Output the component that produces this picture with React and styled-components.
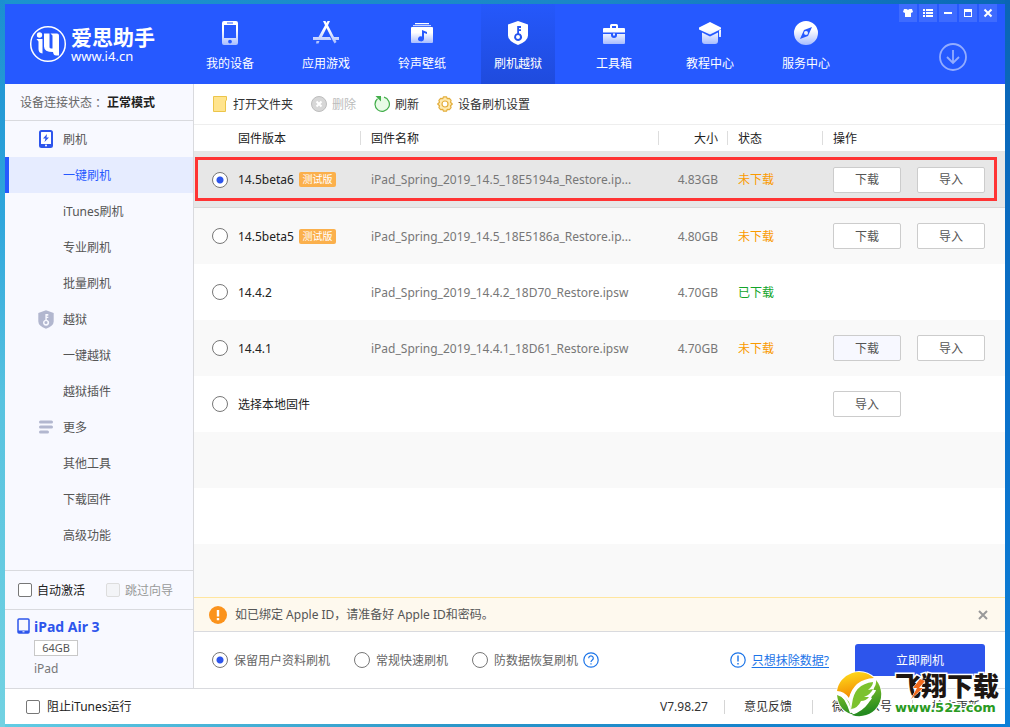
import React from "react";
import styled, { createGlobalStyle, css } from "styled-components";

const blue = "#2659ff";
const royal = "#2d55ec";
const line = "#d9dade";

const GlobalStyle = createGlobalStyle`
  * { box-sizing: border-box; }
  body { margin: 0; }
  body, button, input {
    font: 12px/17px "Noto Sans", "Noto Sans CJK SC", sans-serif;
    color: #333;
  }
  button { padding: 0; border: 0; background: none; cursor: pointer; white-space: nowrap; }
  svg { display: block; flex: none; }
`;

const Desktop = styled.div`
  min-height: 100vh;
  padding: 4px 5px 3px;
  display: flex;
  background:
    linear-gradient(180deg, #1b8fd0, #2fa6dc 30%, #58c3e0 55%, #72d2e2) left / 5px 100% no-repeat,
    linear-gradient(180deg, #0a65b5, #0a72cc 60%, #0c80d8) right / 5px 100% no-repeat,
    linear-gradient(90deg, #1b93cf, #1a86c6 60%, #0a68b6) top / 100% 4px no-repeat,
    linear-gradient(90deg, #62cde4, #2b97c9 45%, #1583cc 75%, #0c80d8) bottom / 100% 3px no-repeat;
`;
const Window = styled.div`
  flex: 1;
  min-width: 0;
  display: flex;
  flex-direction: column;
  background: #fff;
`;

/* ---- header ---- */
const Header = styled.header`
  height: 80px;
  display: flex;
  background: ${blue};
  color: #fff;
`;
const Brand = styled.a`
  width: 188px;
  padding-left: 24px;
  display: flex;
  align-items: center;
  gap: 4px;
  color: #fff;
  text-decoration: none;
`;
const BrandText = styled.span`
  display: flex;
  flex-direction: column;
`;
const BrandName = styled.strong`
  font-size: 21px;
  line-height: 24px;
  font-weight: 700;
`;
const BrandSite = styled.span`
  font-size: 13px;
  line-height: 14px;
`;
const Nav = styled.nav`
  display: flex;
  gap: 22px;
`;
const NavItem = styled.button`
  width: 74px;
  padding-top: 17px;
  display: flex;
  flex-direction: column;
  align-items: center;
  gap: 10px;
  color: #fff;
  background: ${(p) => (p.$active ? "linear-gradient(#2558fb, #1f4bdd)" : "none")};
`;
const HeaderSide = styled.div`
  margin-left: auto;
  padding-right: 8px;
  display: flex;
  flex-direction: column;
  align-items: flex-end;
  gap: 20px;
`;
const WindowControls = styled.div`
  display: flex;
  gap: 2px;
`;
const ControlButton = styled.button`
  width: 18px;
  height: 18px;
  display: grid;
  place-items: center;
  background: #3e6bff;
`;
const DownloadButton = styled.button`
  margin-right: 29px;
`;

/* ---- sidebar ---- */
const Body = styled.div`
  flex: 1;
  display: flex;
`;
const Sidebar = styled.aside`
  width: 189px;
  flex: none;
  display: flex;
  flex-direction: column;
  background: #f8f9ff;
  border-right: 1px solid ${line};
`;
const ConnectionStatus = styled.div`
  height: 37px;
  padding-left: 15px;
  display: flex;
  align-items: center;
  color: #666;
  border-bottom: 1px solid ${line};
  strong { margin-left: 3px; color: #222; }
`;
const Colon = styled.span`
  font-family: "Noto Sans CJK JP", sans-serif;
`;
const Menu = styled.nav`
  flex: 1;
`;
const MenuItem = styled.a`
  height: 36px;
  display: grid;
  grid-template-columns: 26px 1fr;
  gap: 4px;
  align-items: center;
  padding-left: 28px;
  color: #555;
  text-decoration: none;
  ${(p) => p.$active && css`
    color: ${blue};
    background: #e6ecff;
    box-shadow: inset 4px 0 ${blue};
  `}
`;
const MenuIcon = styled.span`
  display: grid;
  place-items: center;
`;
const Activation = styled.div`
  height: 40px;
  padding-left: 13px;
  display: flex;
  align-items: center;
  gap: 21px;
  border: solid ${line};
  border-width: 1px 0;
`;
const CheckLabel = styled.label`
  display: flex;
  align-items: center;
  gap: ${(p) => p.$gap || 5}px;
  color: ${(p) => (p.$disabled ? "#999" : "#222")};
`;
const Checkbox = styled.input.attrs({ type: "checkbox" })`
  appearance: none;
  width: 14px;
  height: 14px;
  margin: 0;
  border: 1px solid #777;
  border-radius: 2px;
  background: #fff;
  &:checked { background: ${royal}; }
  &:disabled { border-color: #ddd; background: #f3f4f7; }
`;
const Device = styled.section`
  height: 78px;
  padding: 8px 0 0 11px;
  display: grid;
  grid-template-columns: 14px 1fr;
  column-gap: 4px;
  align-content: start;
  color: #777;
`;
const DeviceName = styled.h2`
  margin: 0;
  font-size: 14px;
  line-height: 18px;
  color: ${royal};
`;
const DeviceInfo = styled.div`
  grid-column: 2;
  display: flex;
  flex-direction: column;
  align-items: flex-start;
  gap: 4px;
  padding-top: 4px;
`;
const Capacity = styled.span`
  width: 44px;
  border: 1px solid #c8c8c8;
  background: #fff;
  font-size: 11px;
  line-height: 14px;
  text-align: center;
  color: #555;
`;

/* ---- content ---- */
const Content = styled.main`
  flex: 1;
  min-width: 0;
  display: flex;
  flex-direction: column;
`;
const Toolbar = styled.div`
  height: 41px;
  padding-left: 18px;
  display: flex;
  align-items: center;
  gap: 18px;
  border-bottom: 1px solid #eee;
`;
const ToolButton = styled.button`
  display: flex;
  align-items: center;
  gap: 5px;
  color: #333;
  &:disabled { color: #bbb; }
`;
const ListArea = styled.div`
  position: relative;
  flex: 1;
  background: repeating-linear-gradient(#f9f9f9 0 56px, #fff 56px 112px) 0 307px no-repeat;
`;
const Highlight = styled.div`
  position: absolute;
  top: 32px;
  left: 1px;
  right: 8px;
  height: 44px;
  border: 3px solid #ff3434;
  pointer-events: none;
`;
const FirmwareTable = styled.table`
  width: 100%;
  table-layout: fixed;
  border-collapse: separate;
  border-spacing: 0;
  background: #fff;
`;
const Th = styled.th`
  width: ${(p) => p.$width || "auto"};
  height: 27px;
  padding: 0 10px;
  padding-left: ${(p) => p.$indent || 10}px;
  font-weight: 400;
  text-align: ${(p) => p.$align || "left"};
  color: #222;
  border-bottom: 1px solid #e6e6e6;
  background: ${(p) => (p.$last ? "none" : "linear-gradient(#ddd, #ddd) right center / 1px 14px no-repeat")};
`;
const Row = styled.tr`
  background: ${(p) => (p.$selected ? "#e7e7e7" : "#fff")};
  &:nth-child(even) { background: #f9f9f9; }
  td { border-bottom: ${(p) => (p.$selected ? "1px solid #d8d8d8" : "0")}; }
`;
const Td = styled.td`
  height: 56px;
  padding: 0 10px;
  text-align: ${(p) => p.$align || "left"};
  color: #777;
  white-space: nowrap;
  overflow: hidden;
`;
const VersionCell = styled(Td)`
  padding-left: 18px;
`;
const RadioLabel = styled.label`
  display: flex;
  align-items: center;
  gap: ${(p) => p.$gap || 6}px;
  color: ${(p) => p.$color || "#666"};
  white-space: nowrap;
`;
const Radio = styled.input.attrs({ type: "radio" })`
  appearance: none;
  flex: none;
  width: 16px;
  height: 16px;
  margin: 0;
  border: 1px solid #777;
  border-radius: 50%;
  background: #fff;
  &:checked { background: radial-gradient(circle, ${royal} 0 3px, #fff 4px); }
`;
const Version = styled.span`
  display: flex;
  align-items: center;
  gap: 5px;
`;
const Badge = styled.span`
  width: 37px;
  border-radius: 2px;
  background: #fbb04c;
  color: #fff;
  font-size: 10px;
  line-height: 15px;
  text-align: center;
`;
const Status = styled.span`
  color: ${(p) => (p.$done ? "#13a52a" : "#fa9a00")};
`;
const Actions = styled.div`
  display: flex;
  gap: 16px;
`;
const ActionButton = styled.button`
  width: 68px;
  height: 26px;
  border: 1px solid #ccc;
  border-radius: 2px;
  background: ${(p) => (p.$hover ? "#f7f8ff" : "#fff")};
  color: #555;
`;

/* ---- notice and options ---- */
const Notice = styled.div`
  height: 35px;
  padding: 0 17px 0 15px;
  display: flex;
  align-items: center;
  gap: 8px;
  background: #fef9ee;
  color: #555;
  border-top: 1px solid #ffe6a0;
  border-bottom: 1px solid ${line};
  button { margin-left: auto; }
`;
const Options = styled.div`
  height: 56px;
  padding: 0 20px 0 18px;
  display: flex;
  align-items: center;
  gap: 24px;
`;
const HelpOption = styled.div`
  display: flex;
  align-items: center;
  gap: 5px;
`;
const EraseLink = styled.a`
  margin: 0 2px 0 auto;
  display: flex;
  align-items: center;
  gap: 6px;
  color: #1b74e8;
  text-underline-offset: 2px;
`;
const FlashButton = styled.button`
  width: 130px;
  height: 32px;
  border-radius: 3px;
  background: ${royal};
  color: #fff;
`;

/* ---- footer ---- */
const Footer = styled.footer`
  position: relative;
  height: 36px;
  padding: 0 25px 0 21px;
  display: flex;
  align-items: center;
  justify-content: space-between;
  border-top: 1px solid ${line};
  background: #fff;
`;
const FooterLinks = styled.div`
  display: flex;
  align-items: center;
  gap: 20px;
  color: #333;
`;
const AppVersion = styled.span`
  margin-right: -4px;
`;
const FooterLink = styled.a`
  padding-left: 20px;
  background: linear-gradient(#d5d5d5, #d5d5d5) left center / 1px 14px no-repeat;
  color: inherit;
  text-decoration: none;
`;
const Watermark = styled.div`
  position: absolute;
  right: 6px;
  bottom: 7px;
  display: flex;
  align-items: center;
  gap: 13px;
  pointer-events: none;
`;
const WatermarkText = styled.div`
  position: relative;
  display: flex;
  flex-direction: column;
  paint-order: stroke;
  -webkit-text-stroke: 3px #fff;
  font-weight: 900;
  svg { position: absolute; left: 14px; top: 5px; }
`;
const WatermarkName = styled.span`
  font-size: 26px;
  line-height: 27px;
  color: #1d1512;
`;
const WatermarkSite = styled.span`
  font-family: "DejaVu Sans", sans-serif;
  font-size: 13px;
  line-height: 16px;
  color: #2a9a22;
`;

/* ---- drawings ---- */
const Fade = ({ id }) => (
  <linearGradient id={id} x1="0" y1="0" x2="0" y2="1">
    <stop offset="0.35" stopColor="#fff" />
    <stop offset="1" stopColor="#a9bdff" />
  </linearGradient>
);
const NavSvg = ({ id, children }) => (
  <svg width="26" height="24" viewBox="0 0 26 24" aria-hidden="true">
    <defs><Fade id={id} /></defs>
    <g fill={`url(#${id})`}>{children}</g>
  </svg>
);
const shieldKey = "M13 0 23 3.500V14.500Q23 20 13 24 3 20 3 14.500V3.500ZM12.200 5V12.200A4 4 0 1 0 14 12.200V10H16V8.300H14V7H16V5ZM13 14A2 2 0 1 1 13 18 2 2 0 0 1 13 14Z";

const navIcons = [
  <NavSvg id="n0"><path fillRule="evenodd" d="M7 0h12a2 2 0 0 1 2 2v20a2 2 0 0 1-2 2H7a2 2 0 0 1-2-2V2a2 2 0 0 1 2-2zM7 4v13h12V4zM10 1.500v1h6v-1zM13 18.700a1.900 1.900 0 1 0 0 3.800 1.900 1.900 0 0 0 0-3.800z" /></NavSvg>,
  <NavSvg id="n1"><path d="M10 0h2.500l1 2 1-2H17l-2 4.200L21 16h4.500a1 1 0 0 1 0 3H22.500l1 2-2 1.500-2-3.500-6-12-4.500 9h8l1.500 3h-18a1 1 0 0 1 0-3H5.500L12 4.200zM3.500 20h3L5.500 22.500H3z" /></NavSvg>,
  <NavSvg id="n2"><path d="M6 2h14v1.200H6zM4 4h18v1.200H4z" /><path fillRule="evenodd" d="M3 6h20a1 1 0 0 1 1 1v14a1 1 0 0 1-1 1H3a1 1 0 0 1-1-1V7a1 1 0 0 1 1-1zm10 3v6.500a3 2.500 0 1 0 2 2.500v-6l3 1V11z" /></NavSvg>,
  <svg width="26" height="24" viewBox="0 0 26 24" aria-hidden="true"><path fill="#fff" fillRule="evenodd" d={shieldKey} /></svg>,
  <NavSvg id="n4"><path fillRule="evenodd" d="M9 7V4.500A1.500 1.500 0 0 1 10.500 3h5A1.500 1.500 0 0 1 17 4.500V7h6a1 1 0 0 1 1 1v3.500H2V8a1 1 0 0 1 1-1zm2 0h4V5h-4zM2 13h8v1a3 3 0 0 0 6 0v-1h8v9a1 1 0 0 1-1 1H3a1 1 0 0 1-1-1zM12 12.500h2V14.500h-2z" /></NavSvg>,
  <NavSvg id="n5"><path d="M13 1 24 6.500V8L13 13.500 2 8.500V6.500zM5 11.500l8 4 8-4V20a3 3 0 0 1-3 3H8a3 3 0 0 1-3-3zM22 9.500l2-1V16h-2z" /></NavSvg>,
  <NavSvg id="n6"><path fillRule="evenodd" d="M13 0a12 12 0 1 1 0 24 12 12 0 0 1 0-24zM19 6l-8 3-4 9 8-3zM13 10a2 2 0 1 1 0 4 2 2 0 0 1 0-4z" /></NavSvg>,
];

const LogoMark = () => (
  <svg width="38" height="38" viewBox="0 0 38 38" aria-hidden="true">
    <circle cx="19" cy="19" r="17.300" fill="none" stroke="#fff" strokeWidth="1.500" />
    <g fill="#fff">
      <circle cx="10.500" cy="10" r="2.700" />
      <path d="M7.500 14H13.500V28.500Q9.500 28 9.500 24V16.500zM15 8.500h5.500V22q0 1.500 3 1.500V10.500L21.500 8.500H28q2 0 2 2V30.500H27q-2.500 0-3-3.500-9 0-9-5.500z" />
    </g>
  </svg>
);
const controlIcons = {
  "皮肤": <path fill="#fff" d="M1 1h2.500q1.500 1.500 3 0H9l1 3-2 1v4H2V5L0 4z" />,
  "菜单": <path fill="#fff" d="M0 1h2v2H0zM3 1h7v2H3zM0 4h2v2H0zM3 4h7v2H3zM0 7h2v2H0zM3 7h7v2H3z" />,
  "最小化": <path fill="#fff" d="M1 4h8v2H1z" />,
  "最大化": <path fill="#fff" fillRule="evenodd" d="M1 1h8v8H1zM2 4v4h6V4z" />,
  "关闭": <path stroke="#fff" strokeWidth="2" d="m1.500 1.500 7 7m0-7-7 7" />,
};
const PadIcon = () => (
  <svg width="14" height="18" viewBox="0 0 14 18" aria-hidden="true">
    <rect x="1" y="1" width="12" height="16" rx="1.500" fill="#fff" stroke={royal} strokeWidth="2" />
    <path fill={royal} d="M1 14h12v3H1z" /><circle cx="7" cy="15.500" r="1" fill="#fff" />
    <path fill={royal} d="M8 4 4 8.500h2.500L5.500 12 10 7.500H7.500z" />
  </svg>
);
const ShieldIcon = () => (
  <svg width="20" height="19" viewBox="0 0 26 24" aria-hidden="true"><path fill="#b2b7cf" fillRule="evenodd" d={shieldKey} /></svg>
);
const MoreIcon = () => (
  <svg width="14" height="14" viewBox="0 0 14 14" aria-hidden="true">
    <path stroke="#b2b7cf" strokeWidth="3" strokeLinecap="round" d="M1.500 2h11M1.500 7h11M1.500 12h7" />
  </svg>
);
const CircleMark = ({ mark }) => (
  <svg width="16" height="16" viewBox="0 0 16 16" fill="none" stroke="#1b74e8" aria-hidden="true">
    <circle cx="8" cy="8" r="7.200" strokeWidth="1.200" />
    {mark === "!"
      ? <path strokeWidth="1.400" d="M8 3.500v6M8 11v1.500" />
      : <path strokeWidth="1.200" d="M5.700 6.200a2.300 2.300 0 1 1 3.600 1.900Q8 9 8 10M8 11.200v1.300" />}
  </svg>
);
const toolIcons = {
  open: <><path fill="#ffe48e" stroke="#ecc54a" d="M1.500.500h13V4l-1 1v10.500h-12z" /></>,
  remove: <><circle cx="8" cy="8" r="7.500" fill="#d7d7d7" stroke="#bdbdbd" /><path stroke="#fff" strokeWidth="2" d="m5.500 5.500 5 5m0-5-5 5" /></>,
  refresh: <><circle cx="8" cy="8.200" r="7.200" fill="#e8fbe6" /><path fill="none" stroke="#43ae4b" strokeWidth="1.200" d="M10 1.200A7.200 7.200 0 1 1 3.500 2.700" /><path fill="#43ae4b" d="M1.500 0H7v5.500z" /></>,
  gear: <><path fill="#ffe9ae" stroke="#e3ae3c" strokeWidth="1.200" strokeLinejoin="round" d="M6.500.800h3l.8 1.900 2.100-.3 1.700 2-.6 1.900L15.300 8l-1.800 1.700.6 1.900-1.700 2-2.100-.3-.8 1.900h-3l-.8-1.900-2.100.3-1.700-2 .6-1.900L.7 8l1.800-1.700-.6-1.900 1.700-2 2.100.3z" /><circle cx="8" cy="8" r="3" fill="#fff" stroke="#e3ae3c" strokeWidth="1.200" /></>,
};
const ToolIcon = ({ name }) => (
  <svg width="16" height="16" viewBox="0 0 16 16" aria-hidden="true">{toolIcons[name]}</svg>
);

/* ---- data ---- */
const navLabels = ["我的设备", "应用游戏", "铃声壁纸", "刷机越狱", "工具箱", "教程中心", "服务中心"];
const menu = [
  { text: "刷机", icon: <PadIcon /> },
  { text: "一键刷机", active: true },
  { text: "iTunes刷机" },
  { text: "专业刷机" },
  { text: "批量刷机" },
  { text: "越狱", icon: <ShieldIcon /> },
  { text: "一键越狱" },
  { text: "越狱插件" },
  { text: "更多", icon: <MoreIcon /> },
  { text: "其他工具" },
  { text: "下载固件" },
  { text: "高级功能" },
];
const tools = [
  ["open", "打开文件夹"],
  ["remove", "删除"],
  ["refresh", "刷新"],
  ["gear", "设备刷机设置"],
];
const firmware = [
  { version: "14.5beta6", beta: true, name: "iPad_Spring_2019_14.5_18E5194a_Restore.ip...", size: "4.83GB", status: "未下载", actions: ["下载", "导入"] },
  { version: "14.5beta5", beta: true, name: "iPad_Spring_2019_14.5_18E5186a_Restore.ip...", size: "4.80GB", status: "未下载", actions: ["下载", "导入"] },
  { version: "14.4.2", name: "iPad_Spring_2019_14.4.2_18D70_Restore.ipsw", size: "4.70GB", status: "已下载", actions: [] },
  { version: "14.4.1", name: "iPad_Spring_2019_14.4.1_18D61_Restore.ipsw", size: "4.70GB", status: "未下载", actions: ["下载", "导入"], hover: true },
  { version: "选择本地固件", actions: ["导入"] },
];

export default function App() {
  return (
    <Desktop>
      <GlobalStyle />
      <Window>
        <Header>
          <Brand href="#home">
            <LogoMark />
            <BrandText>
              <BrandName>爱思助手</BrandName>
              <BrandSite>www.i4.cn</BrandSite>
            </BrandText>
          </Brand>
          <Nav>
            {navLabels.map((label, i) => (
              <NavItem key={label} $active={i === 3}>
                {navIcons[i]}
                <span>{label}</span>
              </NavItem>
            ))}
          </Nav>
          <HeaderSide>
            <WindowControls>
              {Object.entries(controlIcons).map(([label, icon]) => (
                <ControlButton key={label} aria-label={label}>
                  <svg width="10" height="10" viewBox="0 0 10 10">{icon}</svg>
                </ControlButton>
              ))}
            </WindowControls>
            <DownloadButton aria-label="下载中心">
              <svg width="30" height="30" viewBox="0 0 30 30" fill="none" stroke="#93acff" strokeWidth="1.800">
                <circle cx="15" cy="15" r="13" />
                <path d="M15 8v13M9 15l6 6 6-6" />
              </svg>
            </DownloadButton>
          </HeaderSide>
        </Header>

        <Body>
          <Sidebar>
            <ConnectionStatus>设备连接状态<Colon>：</Colon><strong>正常模式</strong></ConnectionStatus>
            <Menu>
              {menu.map((m) => (
                <MenuItem key={m.text} href="#menu" $active={m.active}>
                  <MenuIcon>{m.icon}</MenuIcon>
                  <span>{m.text}</span>
                </MenuItem>
              ))}
            </Menu>
            <Activation>
              <CheckLabel><Checkbox />自动激活</CheckLabel>
              <CheckLabel $disabled><Checkbox disabled />跳过向导</CheckLabel>
            </Activation>
            <Device>
              <svg width="14" height="18" viewBox="0 0 14 18" aria-hidden="true">
                <rect x="2" y="1" width="11" height="14" rx="1" fill="none" stroke={royal} strokeWidth="1.500" />
                <path fill={royal} d="M2 12.500h11V15H2z" />
                <path fill="#fff" d="M6.500 13.300h2v1h-2z" />
              </svg>
              <DeviceName>iPad Air 3</DeviceName>
              <DeviceInfo>
                <Capacity>64GB</Capacity>
                <span>iPad</span>
              </DeviceInfo>
            </Device>
          </Sidebar>

          <Content>
            <Toolbar>
              {tools.map(([icon, label]) => (
                <ToolButton key={icon} disabled={icon === "remove"}>
                  <ToolIcon name={icon} />
                  {label}
                </ToolButton>
              ))}
            </Toolbar>

            <ListArea>
              <FirmwareTable>
                <thead>
                  <tr>
                    <Th $width="167px" $indent={44}>固件版本</Th>
                    <Th>固件名称</Th>
                    <Th $width="69px" $align="right">大小</Th>
                    <Th $width="95px">状态</Th>
                    <Th $width="182px" $last>操作</Th>
                  </tr>
                </thead>
                <tbody>
                  {firmware.map((f, i) => (
                    <Row key={f.version} $selected={i === 0}>
                      <VersionCell>
                        <RadioLabel $gap={10} $color="#222">
                          <Radio name="firmware" defaultChecked={i === 0} />
                          <Version>{f.version}{f.beta && <Badge>测试版</Badge>}</Version>
                        </RadioLabel>
                      </VersionCell>
                      <Td>{f.name}</Td>
                      <Td $align="right">{f.size}</Td>
                      <Td><Status $done={f.status === "已下载"}>{f.status}</Status></Td>
                      <Td>
                        <Actions>
                          {f.actions.map((a, j) => (
                            <ActionButton key={a} $hover={f.hover && j === 0}>{a}</ActionButton>
                          ))}
                        </Actions>
                      </Td>
                    </Row>
                  ))}
                </tbody>
              </FirmwareTable>
              <Highlight />
            </ListArea>

            <Notice>
              <svg width="18" height="18" viewBox="0 0 18 18" aria-hidden="true">
                <circle cx="9" cy="9" r="9" fill="#fb931c" />
                <path fill="#fff" d="M7.800 4h2.400v6.500H7.800zM7.800 12h2.400v2.200H7.800z" />
              </svg>
              <span>如已绑定 Apple ID，请准备好 Apple ID和密码。</span>
              <button aria-label="关闭提示">
                <svg width="10" height="10" viewBox="0 0 10 10"><path stroke="#999" strokeWidth="2" d="m1 1 8 8m0-8-8 8" /></svg>
              </button>
            </Notice>

            <Options>
              <RadioLabel><Radio name="mode" defaultChecked />保留用户资料刷机</RadioLabel>
              <RadioLabel><Radio name="mode" />常规快速刷机</RadioLabel>
              <HelpOption>
                <RadioLabel><Radio name="mode" />防数据恢复刷机</RadioLabel>
                <CircleMark mark="?" />
              </HelpOption>
              <EraseLink href="#erase"><CircleMark mark="!" /><u>只想抹除数据?</u></EraseLink>
              <FlashButton>立即刷机</FlashButton>
            </Options>
          </Content>
        </Body>

        <Footer>
          <CheckLabel $gap={7}><Checkbox />阻止iTunes运行</CheckLabel>
          <FooterLinks>
            <AppVersion>V7.98.27</AppVersion>
            <FooterLink href="#feedback">意见反馈</FooterLink>
            <FooterLink href="#wechat">微信公众号</FooterLink>
            <FooterLink href="#update">检查更新</FooterLink>
          </FooterLinks>
          <Watermark>
            <svg width="46" height="46" viewBox="0 0 46 46" aria-hidden="true">
              <defs>
                <linearGradient id="sun" x1="0" y1="0" x2="0.300" y2="1"><stop offset="0" stopColor="#ffe21f" /><stop offset="1" stopColor="#f28a00" /></linearGradient>
                <linearGradient id="leaf" x1="0" y1="0" x2="0.300" y2="1"><stop offset="0" stopColor="#a5d52b" /><stop offset="1" stopColor="#258b20" /></linearGradient>
              </defs>
              <circle cx="23" cy="23" r="23" fill="#fff" />
              <path fill="url(#sun)" d="M1 20A22 22 0 0 1 38 7Q18 8 13 27 8 20 1 20z" />
              <path fill="url(#leaf)" d="M40 9A22 22 0 0 1 16 44Q38 36 38 12zM1 24Q10 26 14 40 16 43 20 44 3 42 1 24z" />
              <path fill="#fff" d="M40 8Q18 9 13 28 9 21 1 21 9 26 14 42 24 41 27 33 34 32 36 27L32 27Q39 24 40 19L36 19Q41 15 40 8z" />
              <path fill="#7cc22e" d="M37 11Q18 13 16 33L15 39Q14 32 8 25L13 31Q14 34 15 38 22 37 25 30 30 30 33 26L28 26Q35 23 37 18L32 19Q37 15 37 11z" />
            </svg>
            <WatermarkText>
              <WatermarkName>飞翔下载</WatermarkName>
              <WatermarkSite>www.52z.com</WatermarkSite>
              <svg width="17" height="22" viewBox="0 0 17 22" aria-hidden="true">
                <path fill="#f36a1c" stroke="#fff" d="M11 1 4 10h4L2 21 14 10h-4l6-7z" />
              </svg>
            </WatermarkText>
          </Watermark>
        </Footer>
      </Window>
    </Desktop>
  );
}
